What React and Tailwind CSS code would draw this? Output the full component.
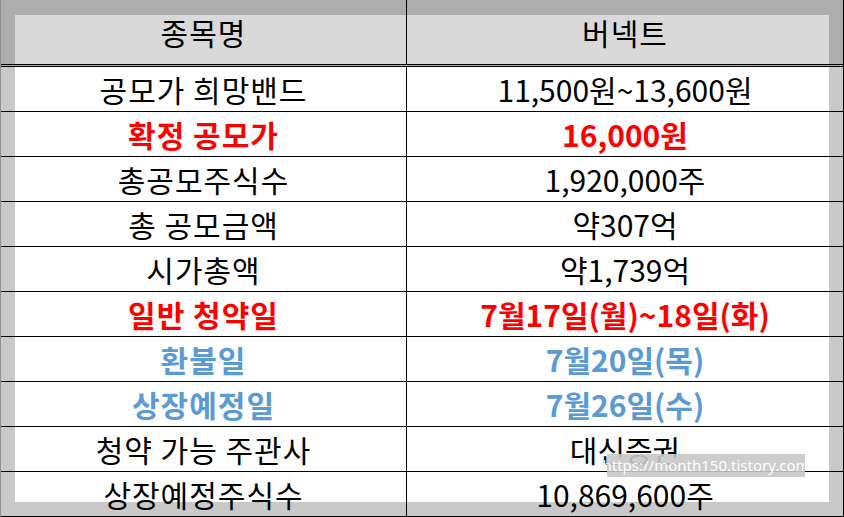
const rows = [
  { name: '공모가 희망밴드', value: '11,500원~13,600원' },
  { name: '확정 공모가', value: '16,000원', tone: 'red' },
  { name: '총공모주식수', value: '1,920,000주' },
  { name: '총 공모금액', value: '약307억' },
  { name: '시가총액', value: '약1,739억' },
  { name: '일반 청약일', value: '7월17일(월)~18일(화)', tone: 'red' },
  { name: '환불일', value: '7월20일(목)', tone: 'blue' },
  { name: '상장예정일', value: '7월26일(수)', tone: 'blue' },
  { name: '청약 가능 주관사', value: '대신증권' },
  { name: '상장예정주식수', value: '10,869,600주', last: true },
];

const toneClass = {
  red: 'font-bold text-[#ff0000]',
  blue: 'font-bold text-[#5b9bd5]',
};

export default function App() {
  return (
    <div className="relative h-[517px] w-[844px] overflow-hidden border-l border-r border-[#8f8f8f] border-r-black bg-white font-['Noto_Sans_CJK_KR',sans-serif] text-[30px] text-black">
      <div className="grid h-[67px] grid-cols-[406px_1fr] border-b-[3px] border-double border-black bg-[linear-gradient(to_bottom,#adadad_15px,transparent_15px),linear-gradient(to_right,#adadad_14px,#d9d9d9_14px,#d9d9d9_828px,#adadad_828px)]">
        <div className="flex items-center justify-center border-r border-black tracking-[1px]">종목명</div>
        <div className="flex items-center justify-center tracking-[1px]">버넥트</div>
      </div>
      {rows.map((row) => (
        <div
          key={row.name}
          className={`grid h-[45px] grid-cols-[406px_1fr] border-b border-black ${row.last ? 'bg-[linear-gradient(to_bottom,transparent_30px,#c9c9c9_30px),linear-gradient(to_right,#c9c9c9_14px,#fff_14px,#fff_828px,#c9c9c9_828px)]' : 'bg-[linear-gradient(to_right,#c9c9c9_14px,#fff_14px,#fff_828px,#c9c9c9_828px)]'}`}
        >
          <div className={`flex items-center justify-center border-r border-black leading-none tracking-[1px] ${toneClass[row.tone] || ''}`}>{row.name}</div>
          <div className={`flex items-center justify-center leading-none ${toneClass[row.tone] || ''}`}>{row.value}</div>
        </div>
      ))}
      {/* blog watermark sits over the table */}
      <div className="absolute left-[606px] top-[454px] flex h-[23px] w-[198px] items-center justify-center bg-[#c8c8c8]/90 font-['Noto_Sans',sans-serif] text-[15px] leading-none text-white">
        https://month150.tistory.com
      </div>
    </div>
  );
}
